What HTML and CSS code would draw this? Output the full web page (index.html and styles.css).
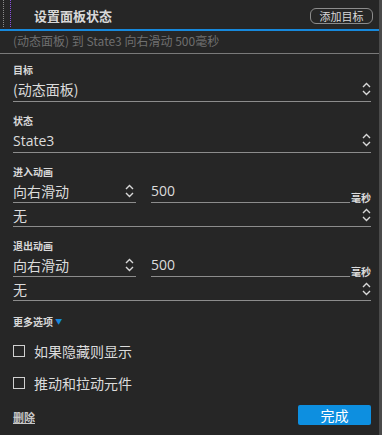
FILE: index.html
```html
<!DOCTYPE html>
<html lang="zh-CN">
<head>
    <meta charset="UTF-8">
    <title>设置面板状态</title>
    <link rel="stylesheet" href="styles.css">
</head>
<body>
<div class="panel">
    <div class="header">
        <div class="guides"></div>
        <h2 class="title">设置面板状态</h2>
        <button class="add-btn">添加目标</button>
    </div>

    <div class="summary">(动态面板) 到 State3 向右滑动 500毫秒</div>

    <div class="form">
        <div class="label label-first">目标</div>
        <div class="select">
            <span>(动态面板)</span>
            <svg class="arrows" width="9" height="14" viewBox="0 0 9 14"><path d="M1 5 L4.5 1.5 L8 5 M1 9 L4.5 12.5 L8 9" fill="none" stroke="#d8d8d8" stroke-width="1.4"/></svg>
        </div>

        <div class="label">状态</div>
        <div class="select">
            <span class="latin">State3</span>
            <svg class="arrows" width="9" height="14" viewBox="0 0 9 14"><path d="M1 5 L4.5 1.5 L8 5 M1 9 L4.5 12.5 L8 9" fill="none" stroke="#d8d8d8" stroke-width="1.4"/></svg>
        </div>

        <div class="label">进入动画</div>
        <div class="anim-row">
            <div class="select select-small">
                <span>向右滑动</span>
                <svg class="arrows" width="9" height="14" viewBox="0 0 9 14"><path d="M1 5 L4.5 1.5 L8 5 M1 9 L4.5 12.5 L8 9" fill="none" stroke="#d8d8d8" stroke-width="1.4"/></svg>
            </div>
            <div class="duration"><span class="latin">500</span></div>
            <span class="unit">毫秒</span>
        </div>
        <div class="select select-tight">
            <span>无</span>
            <svg class="arrows" width="9" height="14" viewBox="0 0 9 14"><path d="M1 5 L4.5 1.5 L8 5 M1 9 L4.5 12.5 L8 9" fill="none" stroke="#d8d8d8" stroke-width="1.4"/></svg>
        </div>

        <div class="label">退出动画</div>
        <div class="anim-row">
            <div class="select select-small">
                <span>向右滑动</span>
                <svg class="arrows" width="9" height="14" viewBox="0 0 9 14"><path d="M1 5 L4.5 1.5 L8 5 M1 9 L4.5 12.5 L8 9" fill="none" stroke="#d8d8d8" stroke-width="1.4"/></svg>
            </div>
            <div class="duration"><span class="latin">500</span></div>
            <span class="unit">毫秒</span>
        </div>
        <div class="select select-tight">
            <span>无</span>
            <svg class="arrows" width="9" height="14" viewBox="0 0 9 14"><path d="M1 5 L4.5 1.5 L8 5 M1 9 L4.5 12.5 L8 9" fill="none" stroke="#d8d8d8" stroke-width="1.4"/></svg>
        </div>

        <div class="label more">更多选项 <span class="caret">&#9660;</span></div>

        <label class="check"><span class="box"></span>如果隐藏则显示</label>
        <label class="check"><span class="box"></span>推动和拉动元件</label>

        <div class="footer">
            <span class="delete">删除</span>
            <button class="done-btn">完成</button>
        </div>
    </div>
</div>
</body>
</html>
```

FILE: styles.css
```css
body {
    margin: 0;
    padding: 0;
    background: #262626;
    font-family: "Noto Sans CJK SC", "Noto Sans", sans-serif;
    color: #dcdcdc;
}
.panel {
    width: 379px;
    height: 435px;
    border-right: 3px solid #4a4a4a;
    background: #262626;
}
.header {
    display: flex;
    align-items: center;
    height: 29px;
    border-bottom: 2px solid #1789dc;
}
.guides {
    align-self: flex-start;
    width: 6px;
    height: 27px;
    margin-left: 3px;
    border-left: 1px dotted #8a8a8a;
    border-right: 1px dotted #8a50e0;
}
.title {
    margin: 0 0 0 23px;
    font-size: 13px;
    font-weight: bold;
    color: #d8d8d8;
    flex: 1;
    line-height: 14px;
    padding-top: 3px;
}
.add-btn {
    margin-right: 6px;
    margin-top: 3px;
    width: 63px;
    height: 16px;
    padding: 0;
    border: 1px solid #8c8c8c;
    border-radius: 6px;
    background: transparent;
    color: #d8d8d8;
    font-family: inherit;
    font-size: 11px;
    line-height: 14px;
}
.summary {
    height: 22px;
    line-height: 20px;
    padding-left: 13px;
    font-size: 12px;
    color: #6f6f6f;
    border-bottom: 1px solid #7a7a7a;
}
.form {
    padding: 0 8px 0 13px;
}
.label {
    font-size: 10px;
    font-weight: bold;
    color: #d8d8d8;
    margin-top: 12px;
    line-height: 14px;
}
.label-first {
    margin-top: 9px;
}
.select {
    display: flex;
    align-items: center;
    justify-content: space-between;
    height: 24px;
    border-bottom: 1px solid #8c8c8c;
    font-size: 14px;
}
.latin {
    font-family: "Open Sans", "Noto Sans", sans-serif;
}
.anim-row {
    display: flex;
    align-items: flex-end;
}
.select-small {
    width: 119px;
    padding-right: 4px;
    height: 23px;
}
.select-small .arrows {
    margin-right: -2px;
}
.duration {
    flex: 1;
    margin-left: 15px;
    height: 23px;
    line-height: 22px;
    font-size: 14px;
    border-bottom: 1px solid #8c8c8c;
}
.unit {
    font-size: 10px;
    font-weight: bold;
    width: 21px;
    text-align: right;
    line-height: 10px;
}
.select-tight {
    height: 23px;
}
.more {
    margin-top: 13px;
}
.caret {
    color: #1789dc;
    font-size: 7px;
    vertical-align: 2px;
}
.check {
    display: flex;
    align-items: center;
    font-size: 14px;
    height: 22px;
    margin-top: 11px;
}
.check + .check {
    margin-top: 10px;
}
.box {
    width: 10px;
    height: 10px;
    border: 1px solid #d0d0d0;
    margin-right: 9px;
}
.footer {
    display: flex;
    justify-content: space-between;
    align-items: center;
    margin-top: 11px;
}
.delete {
    font-size: 11px;
    font-weight: bold;
    color: #c8c8c8;
    text-decoration: underline;
    padding-top: 4px;
}
.done-btn {
    width: 73px;
    height: 20px;
    border: none;
    border-radius: 2px;
    background: #0d8fe0;
    color: white;
    font-family: inherit;
    font-size: 14px;
    line-height: 20px;
    padding: 0;
}
```
